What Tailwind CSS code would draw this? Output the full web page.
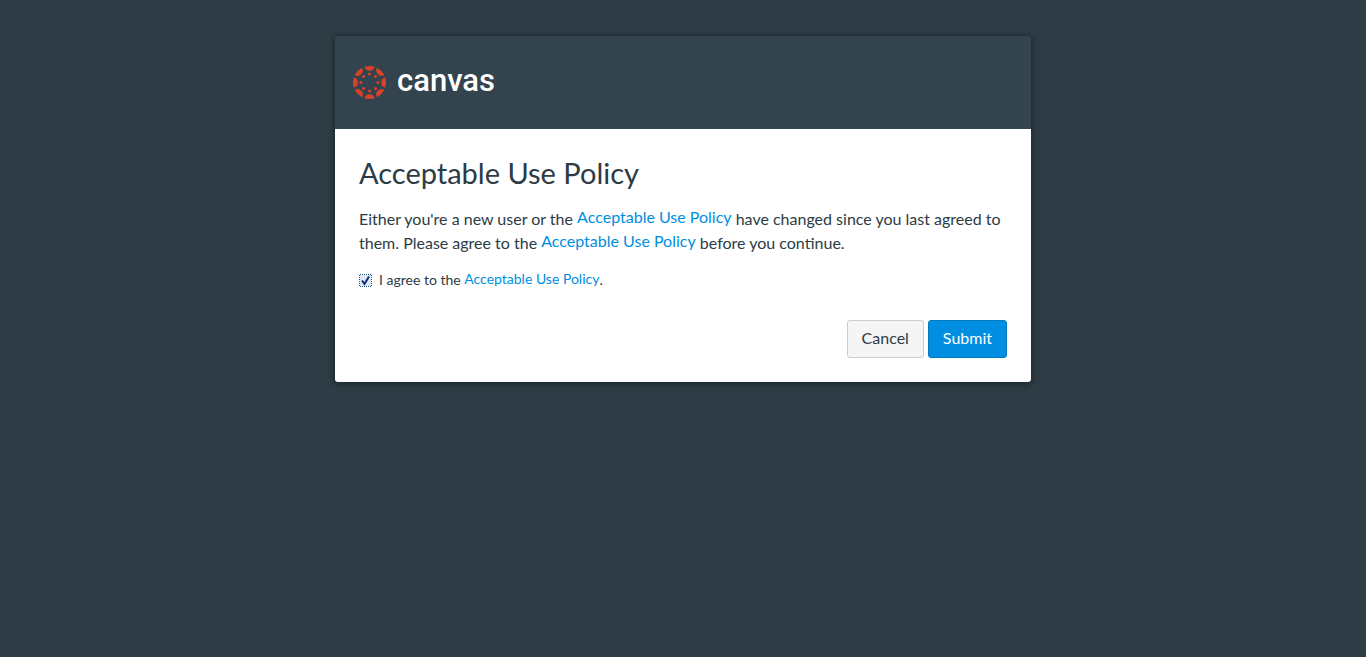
<!DOCTYPE html>
<html lang="en">
<head>
<meta charset="utf-8">
<meta name="viewport" content="width=device-width, initial-scale=1">
<title>Acceptable Use Policy</title>
<script src="https://cdn.jsdelivr.net/npm/@tailwindcss/browser@4"></script>
</head>
<body class="min-h-screen bg-[#2e3c46] px-4 py-9 font-['Lato',sans-serif] text-base text-[#2d3b45]">
<main class="mx-auto max-w-[696px] rounded-[3px] shadow-[0_1px_7px_rgba(0,0,0,0.5)]">
  <header class="flex h-[93px] items-center gap-[11px] rounded-t-[3px] bg-[#34444f] px-[18px]">
    <svg class="size-[33px]" viewBox="-16.5 -16.5 33 33" fill="#db4127" aria-hidden="true">
      <defs>
        <g id="petal">
          <path d="M-5-15.7A16.5 16.5 0 0 1 5-15.7A5.1 5 0 0 1-5-15.7Z"/>
          <circle cy="-8.5" r="1.5"/>
        </g>
      </defs>
      <use href="#petal"/>
      <use href="#petal" transform="rotate(45)"/>
      <use href="#petal" transform="rotate(90)"/>
      <use href="#petal" transform="rotate(135)"/>
      <use href="#petal" transform="rotate(180)"/>
      <use href="#petal" transform="rotate(225)"/>
      <use href="#petal" transform="rotate(270)"/>
      <use href="#petal" transform="rotate(315)"/>
    </svg>
    <span class="pb-1 font-['Roboto',sans-serif] text-[31px] leading-8 font-medium text-white">canvas</span>
  </header>
  <form class="rounded-b-[3px] bg-white p-6">
    <h1 class="mb-3.5 text-[29px] leading-10">Acceptable Use Policy</h1>
    <p class="leading-6">Either you're a new user or the <a href="#" class="align-[2px] leading-4 text-[#008ee2]">Acceptable Use Policy</a> have changed since you last agreed to them. Please agree to the <a href="#" class="align-[2px] leading-4 text-[#008ee2]">Acceptable Use Policy</a> before you continue.</p>
    <div class="mt-[15px] flex items-center gap-[7px] text-sm leading-5">
      <span class="relative flex">
        <input id="agree" type="checkbox" checked class="size-[13px] appearance-none border border-[#1c5180] bg-[#dfe9f5] outline-1 -outline-offset-1 outline-dotted outline-white">
        <svg class="pointer-events-none absolute inset-0 size-[13px]" viewBox="0 0 13 13" fill="none" stroke="#0b2d7c" stroke-width="2" aria-hidden="true"><path d="M3 6.5L5.5 10L10 2.5"/></svg>
      </span>
      <label for="agree">I agree to the <a href="#" class="align-[1px] leading-4 text-[#008ee2]">Acceptable Use Policy</a>.</label>
    </div>
    <div class="mt-[30px] flex justify-end gap-1">
      <button type="button" class="h-[38px] rounded-[3px] border border-[#c7cdd1] bg-[#f5f5f5] px-3.5 pb-0.5 leading-5">Cancel</button>
      <button type="submit" class="h-[38px] rounded-[3px] border border-[#0079c1] bg-[#008ee2] px-3.5 pb-0.5 leading-5 text-white">Submit</button>
    </div>
  </form>
</main>
</body>
</html>
